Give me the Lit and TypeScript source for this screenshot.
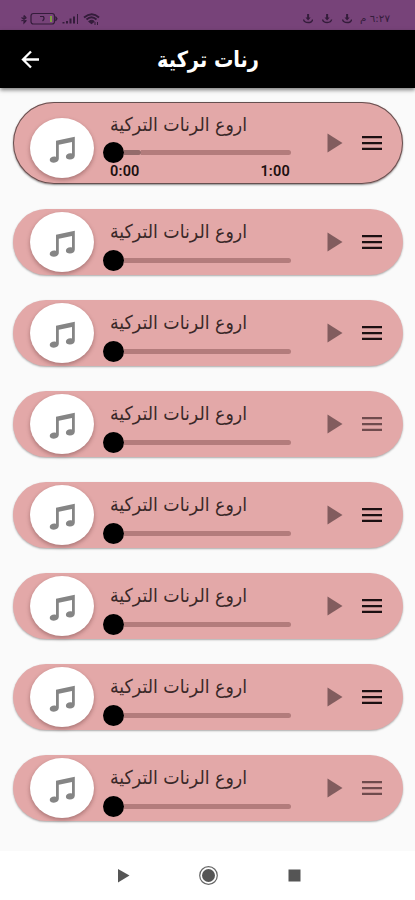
import { LitElement, html, css, svg, nothing } from "lit";
import { customElement, property } from "lit/decorators.js";

@customElement("fit-text")
class FitText extends LitElement {
  @property() text = "";
  @property({ type: Number }) width = 100;
  @property({ type: Number }) height = 30;
  @property({ type: Number }) baseline = 20;
  static styles = css`
    :host { display: block; }
    svg { display: block; overflow: visible; }
    text { font-family: "DejaVu Sans", sans-serif; font-size: var(--size, 17px); font-weight: var(--weight, 400); fill: currentColor; }
  `;
  render() {
    return html`<svg width=${this.width} height=${this.height}>
      ${svg`<text x="0" y=${this.baseline} textLength=${this.width} lengthAdjust="spacingAndGlyphs">${this.text}</text>`}
    </svg>`;
  }
}

@customElement("status-bar")
class StatusBar extends LitElement {
  static styles = css`
    :host { display: flex; justify-content: space-between; height: 30px; background: #774379; color: #341c3b; padding: 0 25px 0 20px; box-sizing: border-box; }
    svg { display: block; }
    .right { display: flex; padding-top: 13px; gap: 9px; }
    .clock { --size: 10px; margin-left: -1px; }
  `;
  render() {
    return html`
      <svg width="82" height="30" fill="none" stroke="currentColor" stroke-width="1.2">
        <path d="M1.500 17.500l5 3.500M1.500 21l5-3.500M4 15.500v7.500l1.800-2M4 15.500l1.800 2" />
        <rect x="11" y="13.500" width="23.500" height="10.500" rx="2.500" />
        <path d="M35.500 16.500l1.500 2.200-1.500 2.300" fill="currentColor" />
        <path d="M20 16.500h3.500q1.500 2.500-1 4.500" />
        <path d="M31 16v6" stroke="#7f9c42" stroke-width="2" />
        <path d="M43.500 22v1.500M47 21v2.500M50.500 18.500v5M54 16.500v7" stroke-width="2" />
        <path d="M57.500 14v10" stroke-width="1" />
        <path d="M64 17.500q8-6.500 15 0M66.500 19.500q5-4.500 10 0" stroke-width="1.900" />
        <path d="M69 21.500q3-2.500 5 0l-2.500 2z" fill="currentColor" />
        <path d="M75 22v3M77.500 22v3" stroke-width="1" />
      </svg>
      <div class="right">
        ${[0, 1, 2].map(() => html`<svg width="10.300" height="12" viewBox="0 0 10.300 12" fill="none" stroke="currentColor">
          <path d="M5.100 1v4" stroke-width="2" /><path d="M2.500 4.500h5.200L5.100 7.600z" fill="currentColor" stroke="none" />
          <path d="M.6 6.500q.5 3 4.500 3t4.500-3" stroke-width="1.400" /></svg>`)}
        <fit-text class="clock" text="٦:٢٧ م" width="30" height="12" baseline="9"></fit-text>
      </div>`;
  }
}

@customElement("tone-card")
class ToneCard extends LitElement {
  @property() name = "";
  @property() length = "";
  @property({ type: Boolean, reflect: true }) expanded = false;
  @property({ type: Boolean, reflect: true }) dim = false;
  static styles = css`
    :host { display: flex; align-items: center; height: 66px; box-sizing: border-box; border-radius: 42px; background: #e3a8a8; padding: 0 21px 0 17px; box-shadow: 0 1px 2px rgba(0,0,0,.32); }
    :host([expanded]) { height: 82px; box-shadow: inset 0 0 0 1px #655050, 0 1px 2px rgba(0,0,0,.45); }
    .disc { width: 64px; height: 60px; border-radius: 50%; background: #fff; box-shadow: 0 2px 4px rgba(60,20,20,.35); flex: none; }
    :host([expanded]) .disc { margin-top: 10px; }
    svg { display: block; }
    .body { width: 181px; margin-left: 8.500px; align-self: stretch; color: #3a2828; flex: none; }
    .title { margin-left: 7.500px; --size: 19px; }
    .slider { display: flex; align-items: center; height: 21px; margin-top: 11.500px; }
    :host([expanded]) .slider { margin-top: 11px; }
    .knob { width: 21px; height: 21px; border-radius: 50%; background: #000; flex: none; }
    .played { width: 17.500px; height: 5px; background: #946b6b; border-radius: 0 3px 3px 0; flex: none; }
    .track { flex: 1; height: 5px; background: #b37c7c; border-radius: 0 3px 3px 0; margin-right: -7.500px; }
    .times { display: flex; justify-content: space-between; margin: 0 -6.500px 0 7.500px; font: 600 14.500px/17px Roboto, sans-serif; letter-spacing: .2px; color: #1d1010; }
    .play { margin-left: 43.500px; flex: none; }
    .menu { margin-left: 19px; flex: none; color: #1c1012; }
    :host([dim]) .menu { color: #6f4b4d; }
  `;
  render() {
    return html`
      <div class="disc"><svg width="64" height="60" fill="#858585">
        <path d="M26 22.800L44.800 18.800V37.500C44.800 40 42.700 41.500 39.900 41.500C37.500 41.500 35.900 40.400 35.900 38.700C35.900 36.700 38 35.200 40.200 35.200C40.900 35.200 41.500 35.300 42 35.600V24L28.800 26.700V40.800C28.800 43.100 26.700 44.700 23.900 44.700C21.500 44.700 19.700 43.600 19.700 42C19.700 40 21.800 38.600 24.200 38.600C24.900 38.600 25.500 38.700 26 38.900Z" />
      </svg></div>
      <div class="body">
        <fit-text class="title" .text=${this.name} width="137" height="29" baseline="28.5"></fit-text>
        <div class="slider"><div class="knob"></div>${this.expanded ? html`<div class="played"></div>` : nothing}<div class="track"></div></div>
        ${this.expanded ? html`<div class="times"><span>0:00</span><span>${this.length}</span></div>` : nothing}
      </div>
      <svg class="play" width="16" height="20" fill="#825c5e"><path d="M0.500 .5L15.500 10L.5 19.500Z" /></svg>
      <svg class="menu" width="20" height="14" fill="currentColor"><path d="M0 0h20v2.200H0zM0 6h20v2.200H0zM0 11.800h20V14H0z" /></svg>`;
  }
}

@customElement("app-root")
class AppRoot extends LitElement {
  static styles = css`
    :host { display: flex; flex-direction: column; height: 900px; width: 415px; background: #fafafa; overflow: hidden; }
    header { display: grid; grid-template-columns: 60px 1fr 60px; height: 58px; flex: none; background: #000; color: #fff; box-shadow: 0 2px 4px rgba(0,0,0,.5); z-index: 1; }
    svg { display: block; }
    .heading { justify-self: center; --size: 22px; --weight: 700; }
    main { flex: 1; display: flex; flex-direction: column; gap: 25px; padding: 14px 12px 0 13px; }
    nav { display: flex; height: 49px; flex: none; background: #fff; }
  `;
  render() {
    return html`
      <status-bar></status-bar>
      <header>
        <svg width="60" height="58" fill="none" stroke="#fff" stroke-width="2.300"><path d="M39 29.500H23M31 21.500L23 29.500L31 37.500" /></svg>
        <fit-text class="heading" text="رنات تركية" width="102" height="58" baseline="37"></fit-text>
      </header>
      <main>
        ${[0, 1, 2, 3, 4, 5, 6, 7].map(
          (i) => html`<tone-card name="اروع الرنات التركية" length="1:00" ?expanded=${i === 0} ?dim=${i === 3 || i === 7}></tone-card>`
        )}
      </main>
      <nav><svg width="415" height="49" fill="#555">
        <path d="M118 18L129.500 24.500L118 31.500Z" />
        <circle cx="208.500" cy="24.500" r="6.500" /><circle cx="208.500" cy="24.500" r="8.800" fill="none" stroke="#666" stroke-width="1.200" />
        <rect x="288.500" y="18.500" width="12" height="12" />
      </svg></nav>`;
  }
}
